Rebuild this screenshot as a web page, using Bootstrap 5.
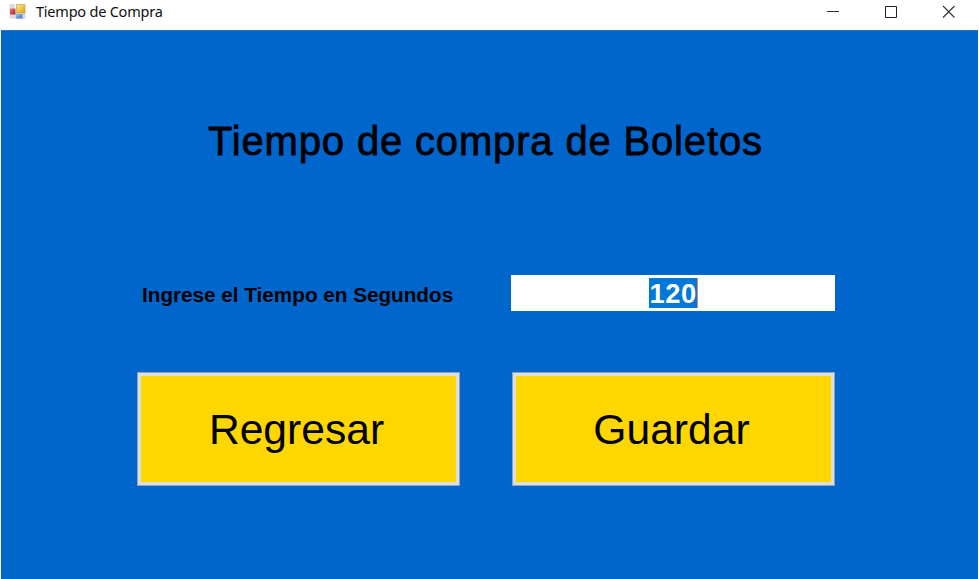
<!DOCTYPE html>
<html lang="es">
<head>
<meta charset="utf-8">
<meta name="viewport" content="width=device-width, initial-scale=1">
<title>Tiempo de Compra</title>
<link href="https://cdn.jsdelivr.net/npm/bootstrap@5.3.0/dist/css/bootstrap.min.css" rel="stylesheet">
<style>
body { font-family: "Liberation Sans", Arial, sans-serif; color: #000; }
.titlebar { height: 30px; padding-left: 9px; }
.titlebar-text { font: 14.5px/22px "Noto Sans", sans-serif; letter-spacing: -.22px; margin-left: 10px; color: #111; }
.win-controls { margin-right: 24px; gap: 45px; padding-top: 5px; }
.form-area { background: #0066cc; margin: 0 1px; border-top: 1px solid #2a73bd; padding: 85px 143px 0 136px; }
.heading { font-size: 40px; line-height: 50px; letter-spacing: .84px; -webkit-text-stroke: .8px #000; margin-left: 71px; }
.fields { display: grid; grid-template-columns: 323px 324px; column-gap: 51px; height: 36px; margin-top: 109px; }
.time-label { font-size: 20.7px; line-height: 36px; padding: 2px 0 0 5px; }
.time-box { height: 36px; padding-top: 3px; }
.selected-value { background: #0078d7; border-right: 1px solid #e5875f; height: 30px; width: 49px; font-size: 27.3px; line-height: 31px; letter-spacing: .6px; padding-left: 1px; }
.actions { display: grid; grid-template-columns: 323px 323px; column-gap: 52px; margin-top: 61px; }
.btn-gold { --bs-btn-bg: #ffd700; --bs-btn-color: #000; --bs-btn-border-color: #dedede; --bs-btn-hover-bg: #ffdf2e; --bs-btn-hover-border-color: #dedede; --bs-btn-border-width: 4px; height: 114px; font-size: 42.6px; line-height: 1; padding: 0 4px 0 0; outline: 1px solid #8ca5b5; outline-offset: -1px; }
</style>
</head>
<body class="vh-100 d-flex flex-column overflow-hidden bg-white">
<header class="titlebar d-flex align-items-start flex-shrink-0">
  <svg class="mt-1" width="17" height="17" viewBox="0 0 17 17" aria-hidden="true">
    <defs>
      <linearGradient id="gold" x2="1" y2="1"><stop stop-color="#ffe793"/><stop offset="1" stop-color="#dca20c"/></linearGradient>
      <linearGradient id="red" x2="1" y2="1"><stop stop-color="#e77a6d"/><stop offset="1" stop-color="#a7231f"/></linearGradient>
      <linearGradient id="blue" x2="1" y2="1"><stop stop-color="#9ac0f5"/><stop offset="1" stop-color="#3b70cb"/></linearGradient>
    </defs>
    <path d="M.5 0H6v14.500H.5z" fill="#d9dbe2"/>
    <path d="M5 9h11.500v6H5z" fill="#d9dbe2"/>
    <path d="M1 4.500h5.500v6H1z" fill="url(#red)"/>
    <path d="M7.500.5H16v8.500H7.500z" fill="url(#gold)" stroke="#c9922b" stroke-width=".6"/>
    <path d="M7 10h6.500v4.500H7z" fill="url(#blue)"/>
  </svg>
  <span class="titlebar-text">Tiempo de Compra</span>
  <div class="win-controls d-flex ms-auto">
    <svg width="13" height="13" viewBox="0 0 13 13" role="img" aria-label="Minimizar"><path d="M1 6.500h12" stroke="#333"/></svg>
    <svg width="13" height="13" viewBox="0 0 13 13" role="img" aria-label="Maximizar"><path d="M1.500 1.500h11v11h-11z" fill="none" stroke="#222"/></svg>
    <svg width="13" height="13" viewBox="0 0 13 13" role="img" aria-label="Cerrar"><path d="M1 1l11.500 11.500M12.500 1L1 12.500" stroke="#333" stroke-width="1.100"/></svg>
  </div>
</header>
<main class="form-area flex-grow-1">
  <h1 class="heading mb-0 fw-normal text-nowrap">Tiempo de compra de Boletos</h1>
  <div class="fields">
    <div class="time-label fw-bold text-nowrap">Ingrese el Tiempo en Segundos</div>
    <div class="time-box bg-white d-flex justify-content-center"><span class="selected-value text-white fw-bold">120</span></div>
  </div>
  <div class="actions">
    <button type="button" class="btn btn-gold rounded-0">Regresar</button>
    <button type="button" class="btn btn-gold rounded-0">Guardar</button>
  </div>
</main>
<script src="https://cdn.jsdelivr.net/npm/bootstrap@5.3.0/dist/js/bootstrap.bundle.min.js"></script>
</body>
</html>
